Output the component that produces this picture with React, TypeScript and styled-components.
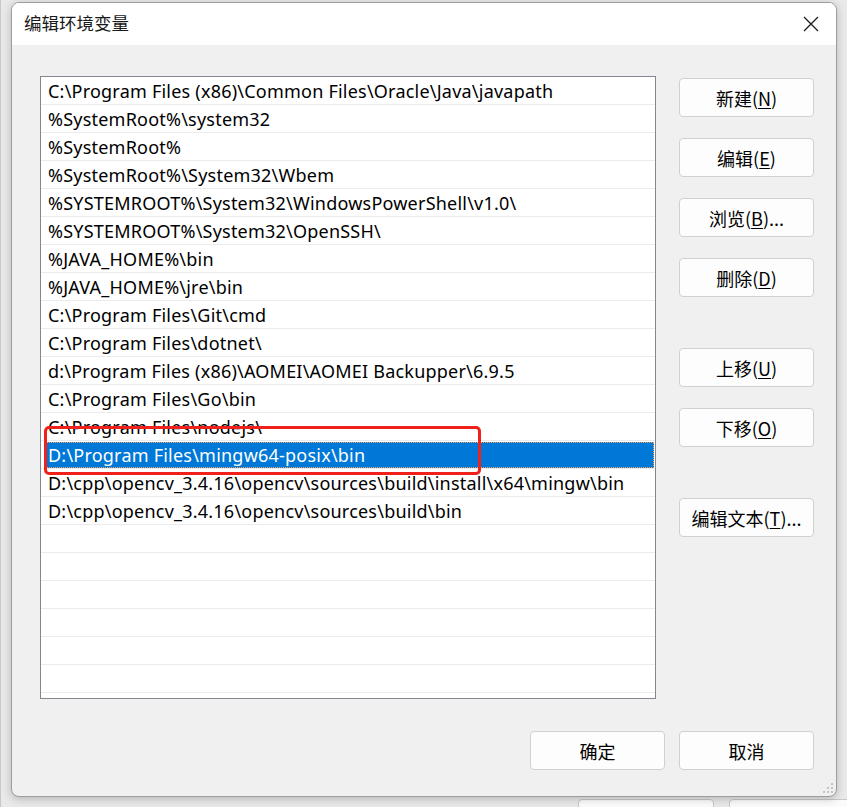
import * as React from 'react';
import styled, { createGlobalStyle } from 'styled-components';

const GlobalStyle = createGlobalStyle`
  html, body {
    margin: 0;
    padding: 0;
    background: #e9e9e9;
  }
  body {
    font-family: 'Noto Sans', 'Noto Sans CJK SC', sans-serif;
    color: #000;
  }
`;

const Desktop = styled.div`
  position: relative;
  width: 847px;
  height: 807px;
  overflow: hidden;
  background: #e9e9e9;
`;

/* the window behind the dialog: only its edges show */
const BackWindow = styled.div`
  display: flex;
  height: 100%;
`;

const LeftStrip = styled.div`
  width: 11px;
  overflow: hidden;
  display: flex;
  flex-direction: column;
  background: #f0f0f0;
  border-right: 1px solid #c8c8c8;
  font-size: 18px;
  line-height: 28px;
  white-space: nowrap;
`;

const StripSpacer = styled.div<{ $h: number; $bg?: string; $line?: boolean }>`
  height: ${(p) => p.$h}px;
  flex: none;
  background: ${(p) => p.$bg || 'transparent'};
  border-bottom: ${(p) => (p.$line ? '1px solid #b8b8b8' : 'none')};
`;

const StripText = styled.div<{ $shift: number; $bg?: string; $small?: boolean }>`
  height: 28px;
  flex: none;
  margin-left: ${(p) => p.$shift}px;
  background: ${(p) => p.$bg || 'transparent'};
  font-size: ${(p) => (p.$small ? '15px' : '18px')};
  font-family: 'Noto Sans CJK SC', sans-serif;
`;

const Middle = styled.div`
  flex: 1;
  display: flex;
  flex-direction: column;
  justify-content: flex-end;
`;

const BottomButtons = styled.div`
  display: flex;
  gap: 15px;
  padding-left: 577px;
  height: 8px;
`;

const BackButton = styled.div`
  width: 134px;
  height: 20px;
  flex: none;
  background: #fbfbfb;
  border: 1px solid #c8c8c8;
  border-radius: 4px;
`;

const RightStrip = styled.div`
  width: 10px;
  display: flex;
  flex-direction: column;
  background: #e2e2e2;
`;

const RightLine = styled.div<{ $gap: number; $dark?: boolean }>`
  flex: none;
  margin-top: ${(p) => p.$gap}px;
  height: 1px;
  background: ${(p) => (p.$dark ? '#8d8d8d' : '#c4c4c4')};
`;

const Dialog = styled.div`
  position: absolute;
  left: 11px;
  top: 2px;
  width: 826px;
  height: 795px;
  box-sizing: border-box;
  display: flex;
  flex-direction: column;
  background: #f0f0f0;
  border: 1px solid #9d9d9d;
  border-radius: 8px;
  overflow: hidden;
  box-shadow: 0 2px 8px rgba(0, 0, 0, 0.22);
`;

const TitleBar = styled.div`
  height: 42px;
  flex: none;
  display: flex;
  align-items: center;
  justify-content: space-between;
  padding: 0 10px 0 12px;
  background: #ffffff;
`;

const Title = styled.span`
  font-family: 'Noto Sans CJK SC', sans-serif;
  font-size: 17.5px;
  color: #1a1a1a;
  margin-top: -3px;
`;

const CloseBox = styled.div`
  width: 30px;
  height: 30px;
  display: flex;
  align-items: center;
  justify-content: center;
`;

const Body = styled.div`
  flex: 1;
  display: flex;
  flex-direction: column;
  padding: 31px 22px 26px 28px;
`;

const Main = styled.div`
  display: flex;
  gap: 23px;
  align-items: flex-start;
`;

const ListBox = styled.div`
  position: relative;
  width: 616px;
  height: 623px;
  box-sizing: border-box;
  flex: none;
  background: #ffffff;
  border: 1px solid #828790;
  display: flex;
  flex-direction: column;
`;

const Row = styled.div`
  height: 28px;
  flex: none;
  box-sizing: border-box;
  border-bottom: 1px solid #ebebeb;
  padding: 0 1px 0 5px;
  display: flex;
`;

const RowInner = styled.div<{ $selected?: boolean }>`
  flex: 1;
  display: flex;
  align-items: center;
  padding-left: 2px;
  margin-top: 1px;
  font-size: 18px;
  white-space: nowrap;
  letter-spacing: 0.22px;
  color: ${(p) => (p.$selected ? '#ffffff' : '#000000')};
  background: ${(p) => (p.$selected ? '#0078d7' : 'transparent')};
  outline: ${(p) => (p.$selected ? '1px dotted #f0a060' : 'none')};
  outline-offset: -1px;
`;

const Marker = styled.div`
  position: absolute;
  left: 3px;
  top: 349px;
  width: 437px;
  height: 49px;
  box-sizing: border-box;
  border: 3.5px solid #f0201a;
  border-radius: 5px;
  pointer-events: none;
`;

const ButtonColumn = styled.div`
  display: flex;
  flex-direction: column;
  padding-top: 2px;
`;

const Button = styled.div<{ $gap?: number }>`
  width: 135px;
  height: 39px;
  box-sizing: border-box;
  flex: none;
  margin-top: ${(p) => p.$gap ?? 0}px;
  display: flex;
  align-items: center;
  justify-content: center;
  background: #fdfdfd;
  border: 1px solid #d0d0d0;
  border-radius: 4px;
  font-family: 'Noto Sans CJK SC', sans-serif;
  font-size: 18px;
  color: #000;
  u {
    text-decoration: underline;
    text-underline-offset: 2px;
  }
`;

const Footer = styled.div`
  margin-top: auto;
  display: flex;
  justify-content: flex-end;
  gap: 14px;
`;

const Grip = styled.svg`
  position: absolute;
  right: 2px;
  bottom: 2px;
`;

const paths = [
  'C:\\Program Files (x86)\\Common Files\\Oracle\\Java\\javapath',
  '%SystemRoot%\\system32',
  '%SystemRoot%',
  '%SystemRoot%\\System32\\Wbem',
  '%SYSTEMROOT%\\System32\\WindowsPowerShell\\v1.0\\',
  '%SYSTEMROOT%\\System32\\OpenSSH\\',
  '%JAVA_HOME%\\bin',
  '%JAVA_HOME%\\jre\\bin',
  'C:\\Program Files\\Git\\cmd',
  'C:\\Program Files\\dotnet\\',
  'd:\\Program Files (x86)\\AOMEI\\AOMEI Backupper\\6.9.5',
  'C:\\Program Files\\Go\\bin',
  'C:\\Program Files\\nodejs\\',
  'D:\\Program Files\\mingw64-posix\\bin',
  'D:\\cpp\\opencv_3.4.16\\opencv\\sources\\build\\install\\x64\\mingw\\bin',
  'D:\\cpp\\opencv_3.4.16\\opencv\\sources\\build\\bin',
];

const rows = [...paths, ...Array(6).fill('')];

const sideButtons: { label: string; key: string; tail?: string; gap: number }[] = [
  { label: '新建', key: 'N', gap: 0 },
  { label: '编辑', key: 'E', gap: 21 },
  { label: '浏览', key: 'B', tail: '...', gap: 21 },
  { label: '删除', key: 'D', gap: 21 },
  { label: '上移', key: 'U', gap: 51 },
  { label: '下移', key: 'O', gap: 21 },
  { label: '编辑文本', key: 'T', tail: '...', gap: 51 },
];

const leftFragments: { text: string; shift: number; bg?: string; small?: boolean }[] = [
  { text: '变量', shift: -6, small: true },
  { text: 'C', shift: 3, bg: '#e3e3e3' },
  { text: 'On', shift: -4 },
  { text: 'at', shift: -2 },
  { text: 'EI', shift: -2 },
  { text: 'M', shift: -1 },
];

const lowerFragments: { text: string; shift: number; bg?: string; small?: boolean }[] = [
  { text: '变量', shift: -6, small: true },
  { text: '变量', shift: -6, small: true },
  { text: 'LA', shift: -1 },
  { text: 'o', shift: -2 },
  { text: 'ri', shift: -5 },
  { text: 'AV', shift: -2 },
  { text: 'IU', shift: -4 },
  { text: 'S', shift: -4 },
  { text: 'at', shift: -2, bg: '#e3e3e3' },
  { text: 'A', shift: 0 },
];

export default function App() {
  return (
    <>
      <GlobalStyle />
      <Desktop>
        <BackWindow>
          <LeftStrip>
            <StripSpacer $h={10} />
            <StripText $shift={4}>8</StripText>
            <StripSpacer $h={18} $bg="#f0f0f0" />
            {leftFragments.map((f, i) => (
              <StripText key={i} $shift={f.shift} $bg={f.bg} $small={f.small}>
                {f.text}
              </StripText>
            ))}
            <StripSpacer $h={63} $line />
            <StripSpacer $h={86} />
            {lowerFragments.map((f, i) => (
              <StripText key={i} $shift={f.shift} $bg={f.bg} $small={f.small}>
                {f.text}
              </StripText>
            ))}
          </LeftStrip>
          <Middle>
            <BottomButtons>
              <BackButton />
              <BackButton />
            </BottomButtons>
          </Middle>
          <RightStrip>
            <RightLine $gap={265} $dark />
            <RightLine $gap={18} />
            <RightLine $gap={30} />
            <RightLine $gap={18} />
            <RightLine $gap={20} />
            <RightLine $gap={20} $dark />
            <RightLine $gap={194} $dark />
            <RightLine $gap={17} />
            <RightLine $gap={30} />
          </RightStrip>
        </BackWindow>

        <Dialog>
          <TitleBar>
            <Title>编辑环境变量</Title>
            <CloseBox>
              <svg width="16" height="16" viewBox="0 0 16 16">
                <path d="M1 1 L15 15 M15 1 L1 15" stroke="#1a1a1a" strokeWidth="1.3" fill="none" />
              </svg>
            </CloseBox>
          </TitleBar>
          <Body>
            <Main>
              <ListBox>
                {rows.map((r, i) => (
                  <Row key={i}>
                    <RowInner $selected={i === 13}>{r}</RowInner>
                  </Row>
                ))}
                <Marker />
              </ListBox>
              <ButtonColumn>
                {sideButtons.map((b) => (
                  <Button key={b.key} $gap={b.gap}>
                    {b.label}(<u>{b.key}</u>){b.tail}
                  </Button>
                ))}
              </ButtonColumn>
            </Main>
            <Footer>
              <Button>确定</Button>
              <Button>取消</Button>
            </Footer>
          </Body>
          <Grip width="12" height="12" viewBox="0 0 12 12">
            <rect x="9" y="1" width="2" height="2" fill="#c4c4c4" />
            <rect x="5" y="5" width="2" height="2" fill="#c4c4c4" />
            <rect x="9" y="5" width="2" height="2" fill="#c4c4c4" />
            <rect x="1" y="9" width="2" height="2" fill="#c4c4c4" />
            <rect x="5" y="9" width="2" height="2" fill="#c4c4c4" />
            <rect x="9" y="9" width="2" height="2" fill="#c4c4c4" />
          </Grip>
        </Dialog>
      </Desktop>
    </>
  );
}
